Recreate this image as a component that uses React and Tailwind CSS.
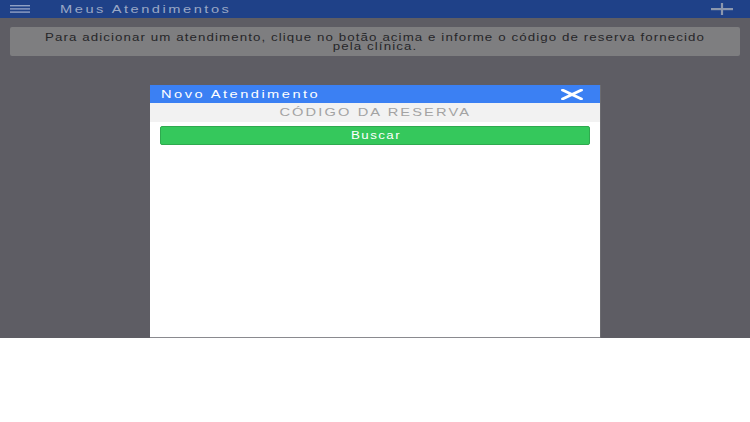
import React from 'react';

function MenuIcon() {
    return (
        <svg width="20" height="8" viewBox="0 0 20 8" className="block">
            <rect x="0" y="0" width="20" height="1.4" fill="#8fa0c4" />
            <rect x="0" y="3.2" width="20" height="1.4" fill="#8fa0c4" />
            <rect x="0" y="6.4" width="20" height="1.4" fill="#8fa0c4" />
        </svg>
    );
}

function PlusIcon() {
    return (
        <svg width="22" height="12" viewBox="0 0 22 12" className="block">
            <rect x="0" y="5" width="22" height="2.2" fill="#8c97ad" />
            <rect x="9.9" y="0" width="2.2" height="12" fill="#8c97ad" />
        </svg>
    );
}

function CloseIcon() {
    return (
        <svg width="22" height="11" viewBox="0 0 22 11" className="block">
            <path d="M1.5 1 L20.5 10 M20.5 1 L1.5 10" stroke="#ffffff" strokeWidth="2.8" strokeLinecap="round" />
        </svg>
    );
}

// the screenshot is stretched sideways, so text is widened with scale-x
function NovoAtendimentoModal() {
    return (
        <div className="absolute left-[150px] top-[85px] w-[450px] h-[253px] bg-white flex flex-col border-b border-[#8a8a8f] shadow-[1px_0_0_#6b6b70]">
            <div className="h-[18px] bg-[#3b80f3] flex items-center justify-between pl-[11px] pr-[17px]">
                <span className="inline-block origin-left scale-x-[1.33] text-white text-[11px] tracking-[1.86px] leading-none">Novo Atendimento</span>
                <CloseIcon />
            </div>
            <div className="h-[19px] bg-[#f2f2f2] flex items-center justify-center">
                <span className="inline-block scale-x-[1.33] text-[#a3a3a3] text-[11px] tracking-[1.6px] leading-none pl-[1px]">CÓDIGO DA RESERVA</span>
            </div>
            <div className="px-[10px] pt-[4px]">
                <button className="w-full h-[19px] bg-[#35c85c] border border-[#2faa4f] rounded-[2px] text-white flex items-center justify-center">
                    <span className="inline-block scale-x-[1.33] text-[10px] tracking-[1.1px] leading-none pl-[1px]">Buscar</span>
                </button>
            </div>
        </div>
    );
}

export default function App() {
    return (
        <div className="w-[750px] h-[422px] bg-white" style={{ fontFamily: '"Liberation Sans", Arial, sans-serif' }}>
            <div className="relative h-[338px] bg-[#5e5d64] flex flex-col">
                <div className="h-[18px] bg-[#1f4188] flex items-center pl-[10px] pr-[17px]">
                    <MenuIcon />
                    <span className="ml-[30px] inline-block origin-left scale-x-[1.33] text-[#9aa8c6] text-[11px] tracking-[1.9px] leading-none">Meus Atendimentos</span>
                    <div className="ml-auto"><PlusIcon /></div>
                </div>
                <div className="mx-[10px] mt-[9px] h-[29px] bg-[#7e7e80] rounded-[2px] flex items-center justify-center">
                    <p className="scale-x-[1.33] text-[#262629] text-[10px] tracking-[0.82px] leading-[9px] text-center w-[506px]">
                        Para adicionar um atendimento, clique no botão acima e informe o código de reserva fornecido pela clínica.
                    </p>
                </div>
                <NovoAtendimentoModal />
            </div>
        </div>
    );
}
